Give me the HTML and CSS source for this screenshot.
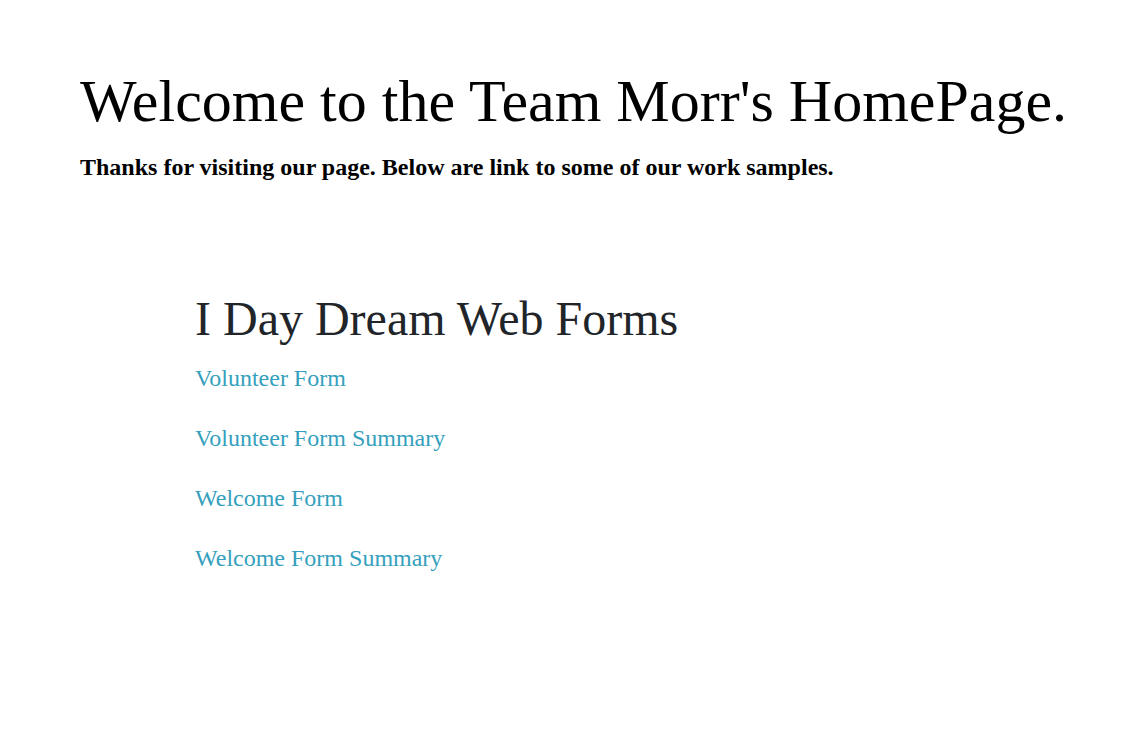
FILE: index.html
```html
<!DOCTYPE html>
<html>
<head>
<meta charset="utf-8">
<title>Team Morr's HomePage</title>
<link rel="stylesheet" href="styles.css">
</head>
<body>
<header class="intro">
  <h1 class="title">Welcome to the Team Morr's HomePage.</h1>
  <h3 class="subtitle">Thanks for visiting our page. Below are link to some of our work samples.</h3>
</header>
<section class="samples">
  <h2 class="samples-title">I Day Dream Web Forms</h2>
  <ul class="links">
    <li><a href="#">Volunteer Form</a></li>
    <li><a href="#">Volunteer Form Summary</a></li>
    <li><a href="#">Welcome Form</a></li>
    <li><a href="#">Welcome Form Summary</a></li>
  </ul>
</section>
</body>
</html>
```
FILE: styles.css
```css
html, body {
  margin: 0;
  padding: 0;
  background: #fff;
}
body {
  font-family: "Liberation Serif", "Times New Roman", serif;
  color: #000;
}
.intro {
  padding: 67px 0 0 80px;
}
.title {
  margin: 0;
  font-size: 60px;
  font-weight: normal;
  line-height: 69px;
  white-space: nowrap;
}
.subtitle {
  margin: 17px 0 0;
  font-size: 24px;
  font-weight: bold;
  line-height: 28px;
}
.samples {
  padding: 110px 0 0 195px;
  color: #212529;
}
.samples-title {
  margin: 0 0 16px;
  font-size: 48px;
  font-weight: normal;
  line-height: 56px;
}
.links {
  list-style: none;
  margin: 0;
  padding: 0;
  display: flex;
  flex-direction: column;
  gap: 30px;
}
.links li {
  font-size: 24px;
  line-height: 30px;
}
.links a {
  color: #35a0bd;
  text-decoration: none;
}
```
